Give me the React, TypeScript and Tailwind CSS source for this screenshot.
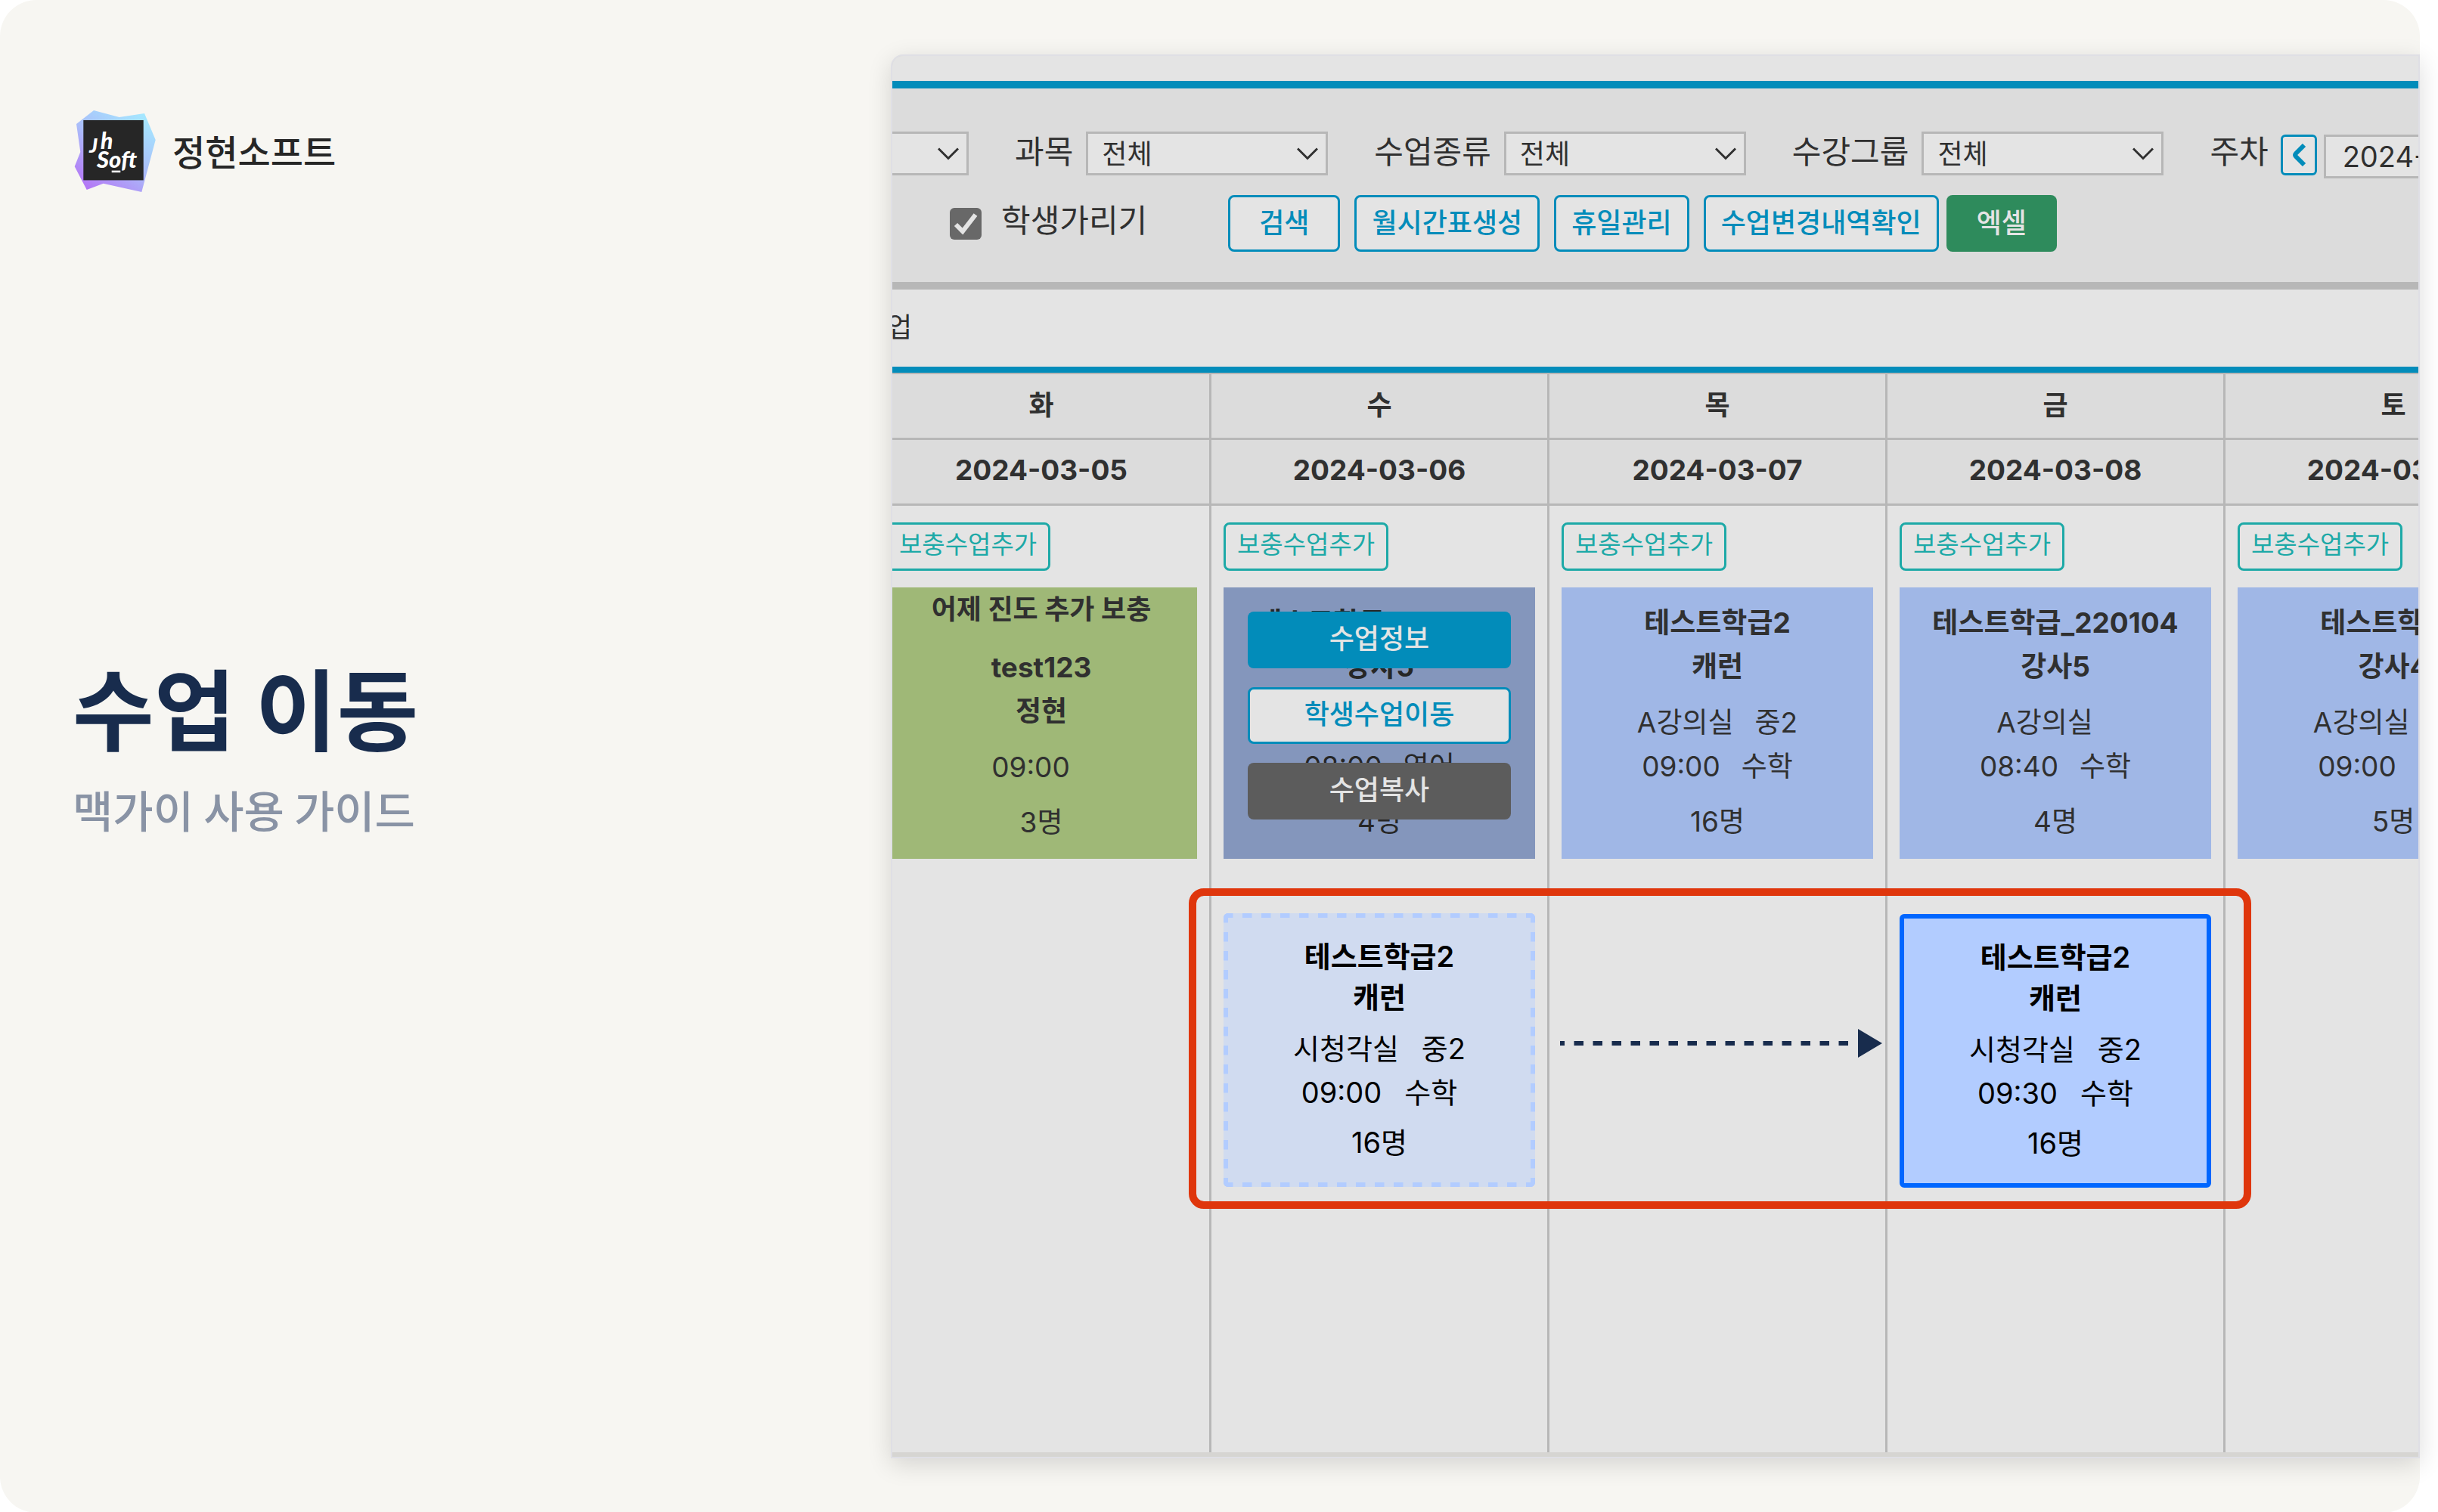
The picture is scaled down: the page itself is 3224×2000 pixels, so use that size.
import type { ReactNode } from "react";

const DAYS = [
  { day: "화", date: "2024-03-05" },
  { day: "수", date: "2024-03-06" },
  { day: "목", date: "2024-03-07" },
  { day: "금", date: "2024-03-08" },
  { day: "토", date: "2024-03-09" },
];

type Lesson = {
  note?: string;
  title: string;
  teacher: string;
  room?: string;
  grade?: string;
  time: string;
  subject?: string;
  count: string;
};

function Logo() {
  return (
    <svg viewBox="-2 -1 112 112" className="h-28 w-28 shrink-0" role="img" aria-label="Jh Soft">
      <defs>
        <linearGradient id="logo-fill" x1="0.85" y1="0.05" x2="0.2" y2="1">
          <stop offset="0" stopColor="#a5e8ff" />
          <stop offset="0.5" stopColor="#aabcf9" />
          <stop offset="1" stopColor="#b475f5" />
        </linearGradient>
      </defs>
      <polygon
        points="26,1 59.7,10 93,5 107.7,40 89.3,109 38.7,97.7 16.7,106 0.7,75.3 8.3,56 3,19"
        fill="url(#logo-fill)"
      />
      <rect x="12.3" y="14" width="79.4" height="79.4" fill="#262626" />
      <g fill="#fff" fontFamily="Lato, sans-serif" fontWeight="900" fontStyle="italic">
        <text x="20" y="57" fontSize="27">J</text>
        <text x="35" y="52" fontSize="30">h</text>
        <text x="30" y="77" fontSize="31">Soft</text>
      </g>
      <rect x="49.7" y="80.6" width="11.6" height="2.6" fill="#fff" />
    </svg>
  );
}

function FilterSelect({ id, label }: { id: string; label: string }) {
  return (
    <div className="flex shrink-0 items-center gap-[17px]">
      <label htmlFor={id} className="pb-1 text-[42px] leading-[50px] whitespace-nowrap">
        {label}
      </label>
      <SelectBox id={id} />
    </div>
  );
}

function SelectBox({ id, label }: { id: string; label?: string }) {
  return (
    <div className="relative h-[58px] w-80 shrink-0">
      <select
        id={id}
        aria-label={label}
        className="h-full w-full appearance-none border-3 border-[#b7b7b7] bg-[#e4e4e4] pt-0.5 pl-[18px] text-[36px] leading-[50px] outline-none"
      >
        <option>{label ? "" : "전체"}</option>
      </select>
      <svg
        viewBox="0 0 28 17"
        className="pointer-events-none absolute top-[21px] right-[13px] h-[17px] w-7"
        fill="none"
        stroke="#303030"
        strokeWidth="3"
      >
        <path d="M1 1.5 L14 14.5 L27 1.5" />
      </svg>
    </div>
  );
}

function OutlineButton({ children, wide }: { children: ReactNode; wide?: boolean }) {
  return (
    <button
      type="button"
      className={`h-[75px] shrink-0 rounded-lg border-3 border-[#028cba] bg-[#e4e4e4] pb-0.5 text-[36px] font-medium whitespace-nowrap text-[#028cba] ${
        wide ? "px-[38px]" : "px-5"
      }`}
    >
      {children}
    </button>
  );
}

function LessonText({ lesson }: { lesson: Lesson }) {
  return (
    <>
      {lesson.note && <p className="mb-[19px] text-[36px] font-bold">{lesson.note}</p>}
      <p className="font-bold">{lesson.title}</p>
      <p className="font-bold">{lesson.teacher}</p>
      {lesson.room && (
        <p className="mt-4 flex justify-center gap-7">
          <span>{lesson.room}</span>
          <span>{lesson.grade}</span>
        </p>
      )}
      <p className={lesson.room ? "flex justify-center gap-7" : "mt-4 flex justify-center gap-7"}>
        <span>{lesson.time}</span>
        <span>{lesson.subject}</span>
      </p>
      <p className="mt-[15px]">{lesson.count}</p>
    </>
  );
}

function LessonCard({
  lesson,
  tone,
  children,
}: {
  lesson: Lesson;
  tone: string;
  children?: ReactNode;
}) {
  return (
    <article
      className={`relative mt-[22px] h-[359px] text-center text-[37px] leading-[58px] whitespace-nowrap ${
        lesson.note ? "" : "pt-[18px]"
      } ${tone}`}
    >
      <LessonText lesson={lesson} />
      {children}
    </article>
  );
}

function MovedLesson({ time, tone, dashed }: { time: string; tone: string; dashed?: boolean }) {
  return (
    <article
      className={`relative h-[362px] overflow-hidden rounded-md text-center text-[38px] whitespace-nowrap text-black ${tone}`}
    >
      {dashed && (
        <svg
          className="absolute inset-0 h-full w-full"
          stroke="#b2ccff"
          strokeWidth="12"
          strokeDasharray="12.5"
          aria-hidden="true"
        >
          <line x1="0" y1="0" x2="100%" y2="0" />
          <line x1="0" y1="100%" x2="100%" y2="100%" />
          <line x1="0" y1="0" x2="0" y2="100%" />
          <line x1="100%" y1="0" x2="100%" y2="100%" />
        </svg>
      )}
      <div className="leading-[54px] font-semibold">
        <p>테스트학급2</p>
        <p>캐런</p>
      </div>
      <div className="mt-3 leading-[58px]">
        <p className="flex justify-center gap-[30px]">
          <span>시청각실</span>
          <span>중2</span>
        </p>
        <p className="flex justify-center gap-[30px]">
          <span>{time}</span>
          <span>수학</span>
        </p>
        <p className="mt-2">16명</p>
      </div>
    </article>
  );
}

function MoveArrow() {
  return (
    <svg viewBox="0 0 426 40" className="mt-[224px] -ml-0.5 h-10 w-[426px]" aria-hidden="true">
      <line x1="0" y1="20" x2="390" y2="20" stroke="#182c4d" strokeWidth="6" strokeDasharray="12.5" strokeDashoffset="6.5" />
      <path d="M394 1 L426 20 L394 39 Z" fill="#182c4d" />
    </svg>
  );
}

function DayCell({ children }: { children: ReactNode }) {
  return (
    <td className="h-[1252px] border-r-3 border-[#b7b7b7] px-4 pt-[22px] align-top">
      <button
        type="button"
        className="block h-16 rounded-lg border-3 border-[#1da9a7] px-[15px] pb-1 text-[33px] whitespace-nowrap text-[#1da9a7]"
      >
        보충수업추가
      </button>
      {children}
    </td>
  );
}

const BLUE = "bg-[#a0b7e6]";

function Timetable() {
  return (
    <div className="relative">
      <table className="-ml-[25px] w-[2235px] table-fixed border-separate border-spacing-0">
        <thead className="bg-[#dcdcdc] text-[36px] leading-[50px] font-bold">
          <tr>
            {DAYS.map((d) => (
              <th key={d.day} scope="col" className="h-[87px] border-r-3 border-b-3 border-[#b7b7b7] pb-0.5">
                {d.day}
              </th>
            ))}
          </tr>
          <tr>
            {DAYS.map((d) => (
              <th key={d.date} scope="col" className="h-[87px] border-r-3 border-b-3 border-[#b7b7b7] pb-1 text-[37px]">
                {d.date}
              </th>
            ))}
          </tr>
        </thead>
        <tbody>
          <tr>
            <DayCell>
              <LessonCard
                tone="bg-[#9fb877]"
                lesson={{ note: "어제 진도 추가 보충", title: "test123", teacher: "정현", time: "09:00", count: "3명" }}
              />
            </DayCell>
            <DayCell>
              <LessonCard
                tone="bg-[#8496bc] text-[#262626]"
                lesson={{
                  title: "테스트학급_220104",
                  teacher: "강사5",
                  room: "A강의실",
                  time: "08:00",
                  subject: "영어",
                  count: "4명",
                }}
              >
                <div className="absolute inset-x-8 top-8 flex flex-col gap-[25px] text-[36px] leading-[50px] font-medium text-[#e4e4e4]">
                  <button type="button" className="h-[75px] rounded-lg bg-[#028cba] pb-1">
                    수업정보
                  </button>
                  <button
                    type="button"
                    className="h-[75px] rounded-lg border-3 border-[#028cba] bg-[#e4e4e4] pb-1 text-[#028cba]"
                  >
                    학생수업이동
                  </button>
                  <button type="button" className="h-[75px] rounded-lg bg-[#5c5c5c] pb-1">
                    수업복사
                  </button>
                </div>
              </LessonCard>
              <div className="mt-[72px]">
                <MovedLesson dashed time="09:00" tone="bg-[#d0dbf0] pt-[30px]" />
              </div>
            </DayCell>
            <DayCell>
              <LessonCard
                tone={BLUE}
                lesson={{
                  title: "테스트학급2",
                  teacher: "캐런",
                  room: "A강의실",
                  grade: "중2",
                  time: "09:00",
                  subject: "수학",
                  count: "16명",
                }}
              />
              <MoveArrow />
            </DayCell>
            <DayCell>
              <LessonCard
                tone={BLUE}
                lesson={{
                  title: "테스트학급_220104",
                  teacher: "강사5",
                  room: "A강의실",
                  time: "08:40",
                  subject: "수학",
                  count: "4명",
                }}
              />
              <div className="mt-[73px]">
                <MovedLesson time="09:30" tone="border-6 border-[#0066ff] bg-[#b2ccff] pt-6" />
              </div>
            </DayCell>
            <DayCell>
              <LessonCard
                tone={BLUE}
                lesson={{
                  title: "테스트학급2",
                  teacher: "강사4",
                  room: "A강의실",
                  grade: "중2",
                  time: "09:00",
                  subject: "수학",
                  count: "5명",
                }}
              />
            </DayCell>
          </tr>
        </tbody>
      </table>
      {/* Highlight ring around the lesson that is being moved */}
      <div className="pointer-events-none absolute top-[680px] left-[392px] h-[424px] w-[1405px] rounded-[20px] border-10 border-[#df360c]" />
    </div>
  );
}

function FilterBar() {
  return (
    <div className="border-y-10 border-t-[#028cba] border-b-[#b7b7b7] bg-[#dcdcdc] pt-[57px] pb-10">
      <div className="flex h-[58px] items-start gap-[61px]">
        <div className="-ml-[219px]">
          <SelectBox id="campus" label="캠퍼스" />
        </div>
        <FilterSelect id="subject" label="과목" />
        <FilterSelect id="kind" label="수업종류" />
        <FilterSelect id="group" label="수강그룹" />
        <div className="flex shrink-0 items-start">
          <label htmlFor="week" className="mr-4 pt-0.5 text-[42px] leading-[50px]">
            주차
          </label>
          <button
            type="button"
            aria-label="이전 주"
            className="mt-1 mr-[9px] flex h-[54px] w-12 items-center justify-center rounded-md border-3 border-[#028cba] bg-[#e4e4e4]"
          >
            <svg viewBox="0 0 20 30" className="h-[30px] w-5" fill="none" stroke="#028cba" strokeWidth="6">
              <path d="M17 2 L6 13 Q4 15 6 17 L17 28" />
            </svg>
          </button>
          <input
            id="week"
            defaultValue="2024-03-04"
            className="mt-1 h-[58px] w-80 border-3 border-[#b7b7b7] bg-[#e4e4e4] pl-[22px] text-[38px] outline-none"
          />
        </div>
      </div>
      <div className="mt-[26px] flex items-center">
        <label className="mr-[107px] ml-[76px] flex items-center gap-[26px] pb-2 text-[42px] leading-[50px] whitespace-nowrap">
          <span className="relative mt-2 h-[42px] w-[42px]">
            <input type="checkbox" defaultChecked className="h-full w-full appearance-none rounded-md bg-[#686868]" />
            <svg
              viewBox="0 0 42 42"
              className="pointer-events-none absolute inset-0"
              fill="none"
              stroke="#e4e4e4"
              strokeWidth="6"
            >
              <path d="M8 22 L17 31 L34 9" />
            </svg>
          </span>
          학생가리기
        </label>
        <div className="flex gap-[19px]">
          <OutlineButton wide>검색</OutlineButton>
          <OutlineButton>월시간표생성</OutlineButton>
          <OutlineButton>휴일관리</OutlineButton>
          <OutlineButton>수업변경내역확인</OutlineButton>
        </div>
        <button
          type="button"
          className="ml-[10px] h-[75px] shrink-0 rounded-lg bg-[#2e8b5c] px-10 pb-0.5 text-[36px] font-medium whitespace-nowrap text-[#e4e4e4]"
        >
          엑셀
        </button>
      </div>
    </div>
  );
}

export default function App() {
  return (
    <div className="min-h-screen bg-white pr-6 font-['Inter','Noto_Sans_CJK_KR',sans-serif]">
      <main className="grid min-h-screen grid-cols-[minmax(0,1178fr)_minmax(0,2022fr)] rounded-[48px] bg-[#f7f6f2]">
        <section className="flex flex-col pt-36 pl-24">
          <div className="flex items-center gap-5">
            <Logo />
            <span className="pb-0.5 font-['Noto_Sans_CJK_KR',sans-serif] text-[47px] leading-[60px] font-medium text-[#262626]">
              정현소프트
            </span>
          </div>
          <h1 className="mt-[597px] font-['Noto_Sans_CJK_KR',sans-serif] text-[117px] leading-[160px] font-bold whitespace-nowrap text-[#182c4d]">
            수업 이동
          </h1>
          <p className="mt-[17px] font-['Noto_Sans_CJK_KR',sans-serif] text-[58px] leading-[80px] font-medium whitespace-nowrap text-[#8993a5]">
            맥가이 사용 가이드
          </p>
        </section>

        <section className="my-[72px] self-start overflow-hidden rounded-tl-2xl border-2 border-[#dfdfe5] bg-[#d6d5d2] pb-[6px] text-[#303030] shadow-[0_8px_32px_rgba(0,0,0,0.14)]">
          <div className="bg-[#e4e4e4] pt-[33px]">
            <FilterBar />
            <div className="flex h-[102px] items-center overflow-hidden pb-0.5 text-[36px]">
              <span className="-ml-10 whitespace-nowrap">수업</span>
            </div>
            <div className="border-t-8 border-b-2 border-t-[#028cba] border-b-[#b7b7b7]" />
            <Timetable />
          </div>
        </section>
      </main>
    </div>
  );
}
